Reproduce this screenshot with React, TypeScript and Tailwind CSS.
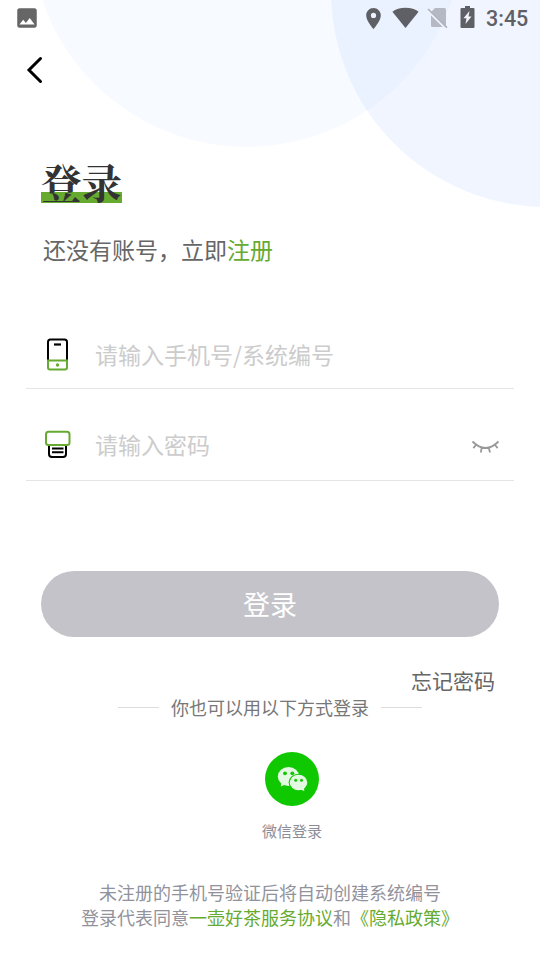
import { useState } from 'react';
import { MdImage, MdPlace } from 'react-icons/md';

const FONT = "font-['Noto_Sans_CJK_SC','Noto_Sans',sans-serif]";

export default function App() {
  const [account, setAccount] = useState('');
  const [password, setPassword] = useState('');
  const [visible, setVisible] = useState(false);
  const ready = account !== '' && password !== '';

  return (
    <div className={`relative flex h-[960px] w-[540px] flex-col overflow-hidden bg-white ${FONT}`}>
      <Backdrop />
      <StatusBar />

      {/* Nav */}
      <div className="relative flex h-[68px] items-center pl-[25px]">
        <button aria-label="返回">
          <svg width="20" height="30" viewBox="0 0 20 30" fill="none" stroke="#000" strokeWidth="3" strokeLinecap="round">
            <path d="M15.500 3.500 4 15l11.500 11.500" />
          </svg>
        </button>
      </div>

      {/* Heading */}
      <div className="relative flex h-[99px] shrink-0 items-end pl-[41px]">
        <h1 className="h-[41px] w-[81px] shrink-0 bg-[linear-gradient(#66aa30,#66aa30)] bg-[length:100%_11px] bg-bottom bg-no-repeat font-['Noto_Serif_CJK_SC','Noto_Sans_CJK_SC',serif] text-[40.5px] leading-[40px] font-bold text-[#333]">
          登录
        </h1>
      </div>
      <p className="relative mt-[29px] ml-[43px] flex h-[34px] shrink-0 items-center text-[23px] text-[#666]">
        还没有账号，立即<a className="text-[#66aa30]">注册</a>
      </p>

      {/* Form */}
      <div className="mx-[26px] mt-[55px] flex h-[68px] shrink-0 items-center border-b border-[#e5e5e5] pb-[2px] pl-[18px]">
        <PhoneIcon />
        <input
          value={account} onChange={(e) => setAccount(e.target.value)}
          placeholder="请输入手机号/系统编号"
          className="ml-[24px] h-[40px] w-[380px] text-[23px] text-[#333] outline-none placeholder:text-[#ccc]"
        />
      </div>
      <div className="mx-[26px] flex h-[92px] shrink-0 items-center border-b border-[#e5e5e5] pt-[19px] pl-[18px]">
        <KeypadIcon />
        <input
          type={visible ? 'text' : 'password'}
          value={password} onChange={(e) => setPassword(e.target.value)}
          placeholder="请输入密码"
          className="ml-[24px] h-[40px] w-[360px] text-[23px] text-[#333] outline-none placeholder:text-[#ccc]"
        />
        <button onClick={() => setVisible(!visible)} className="mt-[5px] ml-[16px]" aria-label="显示密码">
          <ClosedEyeIcon />
        </button>
      </div>

      <button
        disabled={!ready}
        className="mx-[41px] mt-[90px] h-[66px] shrink-0 rounded-full bg-[#66aa30] text-[27px] text-white disabled:bg-[#c3c3c9]"
      >
        登录
      </button>

      <a className="mt-[28px] mr-[45px] h-[31px] self-end text-[21px] leading-[30px] text-[#666]">忘记密码</a>

      {/* Other sign-in methods */}
      <div className="flex h-[22px] items-center justify-center gap-[12px] text-[18px] text-[#777]">
        <span className="h-px w-[41px] bg-[#ddd]" />
        <span className="leading-[22px]">你也可以用以下方式登录</span>
        <span className="h-px w-[41px] bg-[#ddd]" />
      </div>
      <button className="mt-[34px] ml-[262px] flex w-[60px] flex-col items-center">
        <WechatIcon />
        <span className="mt-[14px] text-[15px] leading-[22px] whitespace-nowrap text-[#8d8d99]">微信登录</span>
      </button>

      {/* Agreement */}
      <div className="mt-[38px] text-center text-[18px] leading-[25px] text-[#92929c]">
        <p>未注册的手机号验证后将自动创建系统编号</p>
        <p>
          登录代表同意<a className="text-[#66aa30]">一壶好茶服务协议</a>和<a className="text-[#66aa30]">《隐私政策》</a>
        </p>
      </div>
    </div>
  );
}

/** Two overlapping pale discs behind the header */
function Backdrop() {
  return (
    <svg className="absolute top-0 left-0" width="540" height="210" viewBox="0 0 540 210">
      <circle cx="247" cy="-69" r="216" fill="#f7faff" />
      <circle cx="547" cy="-9" r="216" fill="#dce8ff" fillOpacity="0.42" />
    </svg>
  );
}

function StatusBar() {
  return (
    <div className="relative flex h-[36px] shrink-0 items-center pl-[14px] text-[#5f6065]">
      <MdImage className="h-[26px] w-[26px] text-[#666]" />
      <MdPlace className="ml-[321px] h-[25px] w-[25px]" />
      <svg className="ml-[6px]" width="27" height="22" viewBox="0 0 27 22" fill="currentColor">
        <path d="M13.500 21 .4 4.800C3.500 2.300 8.200 .8 13.500 .8s10 1.500 13.100 4z" />
      </svg>
      <svg className="ml-[8px]" width="21" height="24" viewBox="0 0 21 24">
        <path d="M8 2h9.500Q19 2 19 3.500v16q0 1.500-1.500 1.500H5.500Q4 21 4 19.500V6z" fill="#b5b9c3" />
        <path d="M.3 4.300 19.300 23" stroke="#edf3ff" strokeWidth="2.200" />
        <path d="M1 3 20 21.700" stroke="#b0b4bd" strokeWidth="1.700" />
      </svg>
      <svg className="mb-[2px] ml-[12px]" width="15" height="24" viewBox="0 0 15 24">
        <path d="M5 1h5v2h3.500q1 0 1 1v18q0 1-1 1h-12q-1 0-1-1V4q0-1 1-1H5z" fill="currentColor" />
        <path d="M9.500 6 3.500 13.200h3L5.500 19l6-7.500h-3z" fill="#f0f5ff" />
      </svg>
      <span className="mt-[2px] ml-[11px] font-[Roboto,sans-serif] text-[21.500px] leading-[36px] font-medium">3:45</span>
    </div>
  );
}

function PhoneIcon() {
  return (
    <svg className="shrink-0" width="27" height="34" viewBox="0 0 27 34" fill="none" strokeWidth="2">
      <path d="M4 23V5q0-2.500 2.500-2.500h14Q23 2.500 23 5v18" stroke="#000" />
      <path d="M10 7.500h7" stroke="#000" strokeWidth="2.200" />
      <path d="M4 23.500h19v7q0 2-2 2H6q-2 0-2-2z" stroke="#66aa30" />
      <circle cx="13.500" cy="28" r="1.700" fill="#66aa30" />
    </svg>
  );
}

function KeypadIcon() {
  return (
    <svg className="shrink-0" width="27" height="30" viewBox="0 0 27 30" fill="none" strokeWidth="2">
      <path d="M5 16v9q0 3 3 3h11q3 0 3-3v-9M8 19.500h11.500M8 23.300h11.500" stroke="#000" />
      <rect x="2" y="2.800" width="23.500" height="13.200" rx="2.500" stroke="#66aa30" />
    </svg>
  );
}

function ClosedEyeIcon() {
  return (
    <svg width="29" height="16" viewBox="0 0 29 16" fill="none" stroke="#999" strokeWidth="1.800">
      <path d="M1.500 2.500Q14.500 15.500 27.500 2.500M5 6l-2.700 3.200M10.700 8.800 9.800 13.500M17.800 8.800l1.200 4.700M24 6l2.700 3.200" />
    </svg>
  );
}

function WechatIcon() {
  return (
    <svg width="54" height="54" viewBox="0 0 54 54">
      <circle cx="27" cy="27" r="27" fill="#10c800" />
      <g fill="#e3f9e1">
        <ellipse cx="23.500" cy="24.500" rx="10.700" ry="9.500" />
        <path d="M16.500 30 15.800 34.500 21.500 32z" />
      </g>
      <ellipse cx="33.500" cy="30.500" rx="9.900" ry="8.800" fill="#10c800" />
      <g fill="#e3f9e1">
        <ellipse cx="33.500" cy="30.500" rx="8.800" ry="7.700" />
        <path d="M34.500 37.300 39.300 39 38.800 35z" />
      </g>
      <g fill="#10c800">
        <circle cx="20" cy="21.300" r="1.900" />
        <circle cx="27.300" cy="21.300" r="1.900" />
        <circle cx="30.700" cy="28.200" r="1.500" />
        <circle cx="36.500" cy="28.200" r="1.500" />
      </g>
    </svg>
  );
}
